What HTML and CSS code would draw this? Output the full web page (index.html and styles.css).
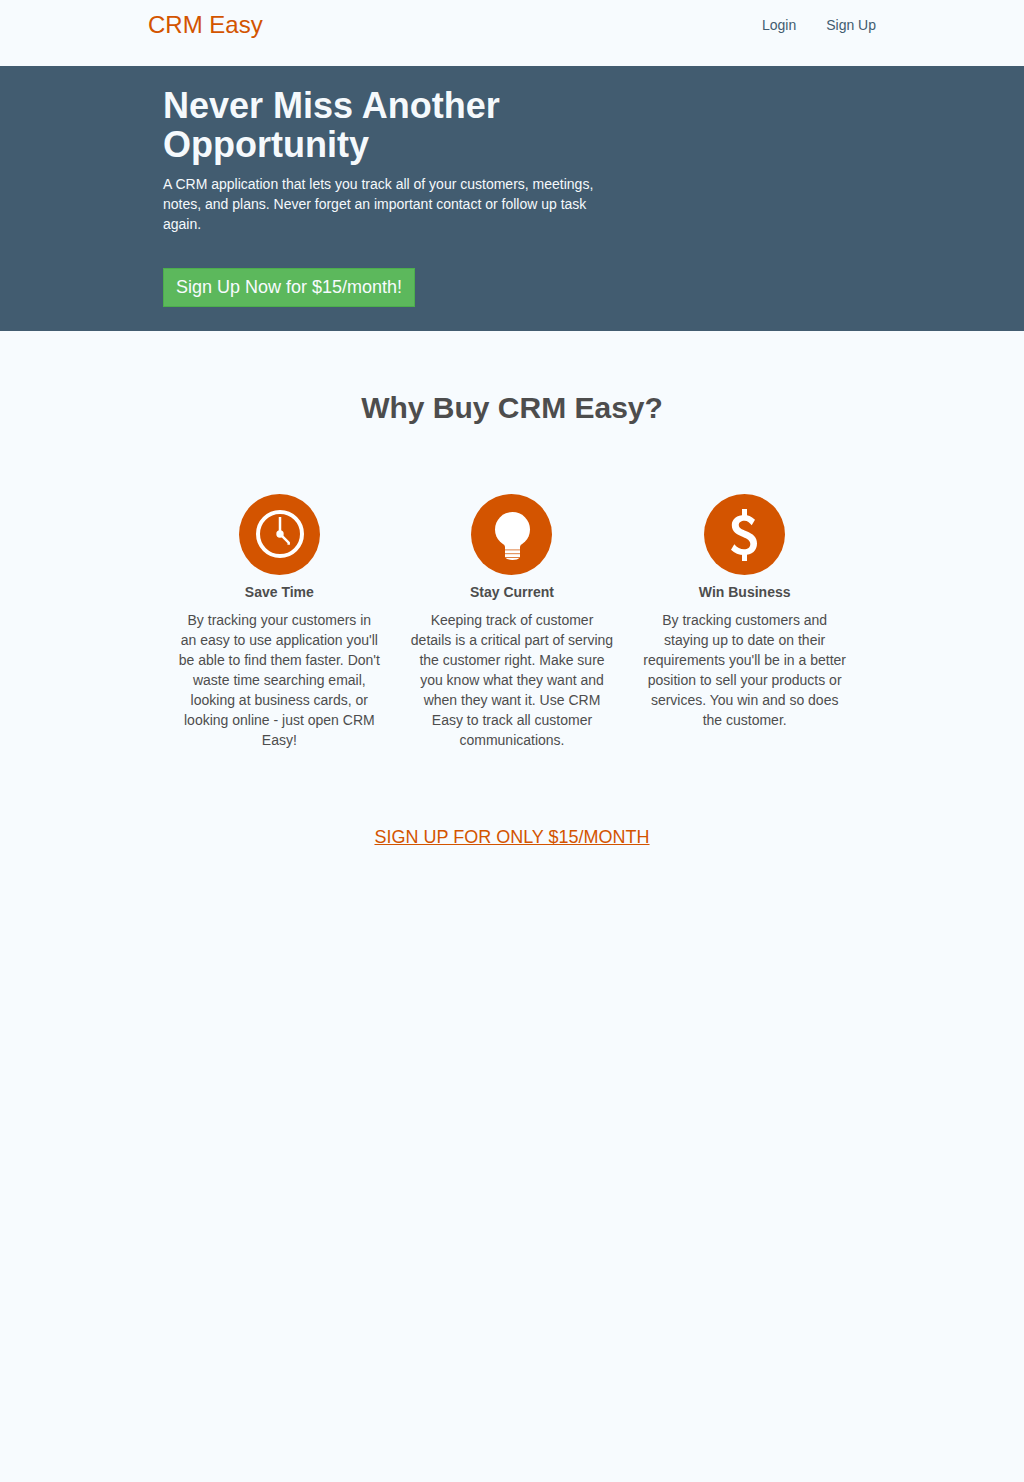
FILE: index.html
```html
<!DOCTYPE html>
<html lang="en">
<head>
<meta charset="utf-8">
<meta name="viewport" content="width=device-width, initial-scale=1">
<title>CRM Easy</title>
<link rel="stylesheet" href="styles.css">
</head>
<body>
<header class="container site-header">
  <a class="brand" href="#">CRM Easy</a>
  <nav class="site-nav">
    <a href="#">Login</a>
    <a href="#">Sign Up</a>
  </nav>
</header>
<main>
  <section class="hero">
    <div class="container">
      <div class="hero-text">
        <h1>Never Miss Another Opportunity</h1>
        <p>A CRM application that lets you track all of your customers, meetings, notes, and plans. Never forget an important contact or follow up task again.</p>
        <button class="signup-button" type="button">Sign Up Now for $15/month!</button>
      </div>
    </div>
  </section>
  <section class="container reasons">
    <h2>Why Buy CRM Easy?</h2>
    <div class="features">
      <article class="feature">
        <svg class="feature-icon" viewBox="0 0 81 81" aria-hidden="true">
          <circle class="disc" cx="40.500" cy="40.500" r="40.500"/>
          <circle cx="41" cy="40" r="22" fill="none" stroke="#fff" stroke-width="4"/>
          <path d="M41 23v17l8.700 8.700v2" fill="none" stroke="#fff" stroke-width="2.500"/>
          <circle cx="41" cy="40" r="3.700" fill="#fff"/>
        </svg>
        <h3>Save Time</h3>
        <p>By tracking your customers in an easy to use application you'll be able to find them faster. Don't waste time searching email, looking at business cards, or looking online - just open CRM Easy!</p>
      </article>
      <article class="feature">
        <svg class="feature-icon" viewBox="0 0 81 81" aria-hidden="true">
          <circle class="disc" cx="40.500" cy="40.500" r="40.500"/>
          <circle cx="41.500" cy="35.500" r="17.500" fill="#fff"/>
          <path d="M32.500 50.500q1.500 .5 1.500 2.500v10.500q2.500 2.500 7.500 2.500t7.500-2.500v-10.500q0-2 1.500-2.500z" fill="#fff"/>
          <path d="M34 55.900h15M34 59.700h15M34 63.500h15" stroke="#d35400" stroke-opacity=".75" stroke-width="1"/>
        </svg>
        <h3>Stay Current</h3>
        <p>Keeping track of customer details is a critical part of serving the customer right. Make sure you know what they want and when they want it. Use CRM Easy to track all customer communications.</p>
      </article>
      <article class="feature">
        <svg class="feature-icon" viewBox="0 0 81 81" aria-hidden="true">
          <circle class="disc" cx="40.500" cy="40.500" r="40.500"/>
          <path d="M38 15h5v8h-5zM38 59h5v8h-5z" fill="#fff"/>
          <path d="M51 25.700C47 22.300 44 21 40.500 21C33 21 27.800 25 27.800 31C27.800 38 33 40.500 39 43C43 44.700 46.300 46.500 46.300 50C46.300 53.500 43.800 55.300 40 55.300C36.500 55.300 33 53.600 30.300 50.300L27 55.700C30.500 59 35 61 40 61C48 61 53 56.500 53 49.500C53 43 49 40 42.500 37.300C37.500 35.200 34.800 34 34.800 31C34.800 28.300 37 26.700 40.500 26.700C43.500 26.700 45.500 28.500 47.700 31.300Z" fill="#fff"/>
        </svg>
        <h3>Win Business</h3>
        <p>By tracking customers and staying up to date on their requirements you'll be in a better position to sell your products or services. You win and so does the customer.</p>
      </article>
    </div>
    <a class="signup-link" href="#">SIGN UP FOR ONLY $15/MONTH</a>
  </section>
</main>
</body>
</html>
```
FILE: styles.css
```css
* {
  box-sizing: border-box;
}

body {
  margin: 0;
  background: #f7fbfe;
  color: #4d4d4d;
  font-family: "Liberation Sans", Arial, sans-serif;
  font-size: 14px;
  line-height: 20px;
}

h1, h2, h3, p {
  margin: 0;
}

.container {
  width: 100%;
  max-width: 728px;
  margin: 0 auto;
}

.site-header {
  display: flex;
  justify-content: space-between;
  align-items: flex-start;
  padding: 15px 0 31px;
}

.brand {
  color: #d35400;
  font-size: 24px;
  line-height: 20px;
  text-decoration: none;
}

.site-nav {
  display: flex;
  gap: 30px;
}

.site-nav a {
  color: #425c70;
  text-decoration: none;
}

.hero {
  padding: 20px 0 24px;
  background: #425c70;
  color: #f5f9fc;
}

.hero-text {
  max-width: 470px;
  padding: 0 15px;
}

.hero h1 {
  margin-bottom: 10px;
  font-size: 36px;
  line-height: 39px;
}

.signup-button {
  display: block;
  margin-top: 34px;
  padding: 6px 12px;
  border: 1px solid #4cae4c;
  background: #5cb85c;
  color: #f7fbfe;
  font: 18px/25px "Liberation Sans", Arial, sans-serif;
  cursor: pointer;
}

.reasons {
  padding: 60px 15px;
  text-align: center;
}

.reasons h2 {
  margin-bottom: 70px;
  font-size: 30px;
  line-height: 33px;
}

.features {
  display: grid;
  grid-template-columns: repeat(auto-fit, minmax(220px, 1fr));
}

.feature {
  padding: 0 15px;
}

.feature-icon {
  display: block;
  width: 81px;
  height: 81px;
  margin: 0 auto 7px;
}

.disc {
  fill: #d35400;
}

.feature h3 {
  margin-bottom: 8px;
  font-size: 14px;
  line-height: 20px;
}

.signup-link {
  display: inline-block;
  margin-top: 74px;
  color: #d35400;
  font-size: 18px;
  line-height: 26px;
}
```
